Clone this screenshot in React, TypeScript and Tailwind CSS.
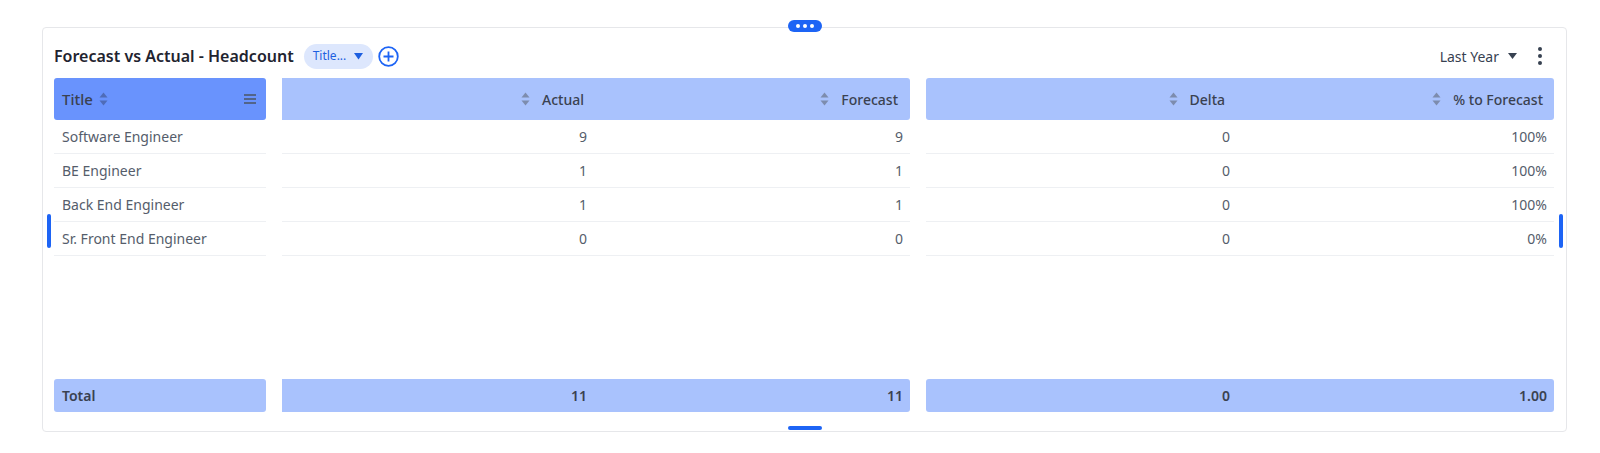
import { useState } from "react";

type Row = { title: string; actual: number; forecast: number; delta: number; pct: string };

const ROWS: Row[] = [
  { title: "Software Engineer", actual: 9, forecast: 9, delta: 0, pct: "100%" },
  { title: "BE Engineer", actual: 1, forecast: 1, delta: 0, pct: "100%" },
  { title: "Back End Engineer", actual: 1, forecast: 1, delta: 0, pct: "100%" },
  { title: "Sr. Front End Engineer", actual: 0, forecast: 0, delta: 0, pct: "0%" },
];

function SortIcon({ dark }: { dark?: boolean }) {
  return (
    <svg width="9" height="14" viewBox="0 0 9 14" className={dark ? "text-[#4f6cb8]" : "text-[#7d8cae]"}>
      <path d="M4.5 0.5 L8.5 5.5 H0.5 Z" fill="currentColor" />
      <path d="M4.5 13.5 L8.5 8.5 H0.5 Z" fill="currentColor" />
    </svg>
  );
}

function HeadCell({ label, className = "" }: { label: string; className?: string }) {
  return (
    <div className={`flex items-center justify-end gap-3 pr-3 ${className}`}>
      <SortIcon />
      <span>{label}</span>
    </div>
  );
}

export default function App() {
  const [period] = useState("Last Year");
  const totals = ROWS.reduce(
    (a, r) => ({ actual: a.actual + r.actual, forecast: a.forecast + r.forecast, delta: a.delta + r.delta }),
    { actual: 0, forecast: 0, delta: 0 }
  );

  return (
    <div className="h-[453px] w-[1600px] bg-white pt-[27px] font-['Noto_Sans',sans-serif] text-[#555d6b]">
      <div className="relative ml-[42px] flex h-[405px] w-[1525px] flex-col rounded border border-[#e6e7ea] pl-[11px] pr-3">
        {/* drag handles */}
        <div className="absolute left-1/2 top-[-8px] flex h-3 w-[34px] -translate-x-1/2 items-center justify-center gap-[3px] rounded-full bg-[#1d64f5]">
          <span className="h-1 w-1 rounded-full bg-white" />
          <span className="h-1 w-1 rounded-full bg-white" />
          <span className="h-1 w-1 rounded-full bg-white" />
        </div>
        <div className="absolute left-1/2 top-[398px] h-1 w-[34px] -translate-x-1/2 rounded-full bg-[#1d64f5]" />
        <div className="absolute left-[4px] top-[186px] h-[34px] w-1 rounded-full bg-[#1d64f5]" />
        <div className="absolute right-[3px] top-[186px] h-[34px] w-1 rounded-full bg-[#1d64f5]" />

        {/* title bar */}
        <div className="mt-[14px] flex h-7 items-center">
          <h2 className="text-[16px] font-semibold text-[#1f2430]">Forecast vs Actual - Headcount</h2>
          <button
            type="button"
            className="ml-[10px] flex h-[25px] items-center gap-2 rounded-full bg-[#dde7fd] pl-[9px] pr-[10px] text-[12px] text-[#1d5fe0]"
          >
            Title...
            <svg width="9" height="7" viewBox="0 0 9 7">
              <path d="M0 0 H9 L4.5 6.5 Z" fill="currentColor" />
            </svg>
          </button>
          <svg width="21" height="21" viewBox="0 0 21 21" className="ml-[5px] text-[#1d64f5]">
            <circle cx="10.5" cy="10.5" r="9.3" fill="none" stroke="currentColor" strokeWidth="1.8" />
            <path d="M10.5 5.5 V15.5 M5.5 10.5 H15.5" stroke="currentColor" strokeWidth="1.8" />
          </svg>
          <div className="ml-auto flex items-center text-[14px] text-[#374151]">
            <span>{period}</span>
            <svg width="9" height="7" viewBox="0 0 9 7" className="ml-[9px]">
              <path d="M0 0 H9 L4.5 6 Z" fill="currentColor" />
            </svg>
            <div className="ml-[21px] mr-[12px] flex flex-col items-center gap-[3px]">
              <span className="h-1 w-1 rounded-full bg-[#374151]" />
              <span className="h-1 w-1 rounded-full bg-[#374151]" />
              <span className="h-1 w-1 rounded-full bg-[#374151]" />
            </div>
          </div>
        </div>

        {/* table */}
        <div className="mt-2 grid h-[334px] grid-cols-[212px_1fr_1fr] gap-x-4 text-[14px]">
          {/* title column */}
          <div className="flex flex-col">
            <div className="flex h-[42px] items-center rounded-[3px] bg-[#6993fd] pl-2 pr-[10px] font-medium text-[#3a4150]">
              <span className="text-[15px]">Title</span>
              <span className="ml-[6px]">
                <SortIcon dark />
              </span>
              <svg width="12" height="10" viewBox="0 0 12 10" className="ml-auto text-[#4b5563]">
                <path d="M0 1 H12 M0 5 H12 M0 9 H12" stroke="currentColor" strokeWidth="1.4" />
              </svg>
            </div>
            {ROWS.map((r) => (
              <div key={r.title} className="flex h-[34px] items-center border-b border-[#eef0f3] pl-2">
                {r.title}
              </div>
            ))}
            <div className="mt-auto flex h-[33px] items-center rounded-[3px] bg-[#a9c2fd] pl-2 font-semibold text-[#3a4150]">
              Total
            </div>
          </div>

          {/* actual / forecast */}
          <div className="flex flex-col">
            <div className="grid h-[42px] grid-cols-2 rounded-r-[3px] bg-[#a9c2fd] font-medium text-[#3a4150]">
              <HeadCell label="Actual" />
              <HeadCell label="Forecast" />
            </div>
            {ROWS.map((r) => (
              <div key={r.title} className="grid h-[34px] grid-cols-2 items-center border-b border-[#eef0f3] text-right">
                <span className="pr-[9px]">{r.actual}</span>
                <span className="pr-[7px]">{r.forecast}</span>
              </div>
            ))}
            <div className="mt-auto grid h-[33px] grid-cols-2 items-center rounded-r-[3px] bg-[#a9c2fd] text-right font-semibold text-[#3a4150]">
              <span className="pr-[9px]">{totals.actual}</span>
              <span className="pr-[7px]">{totals.forecast}</span>
            </div>
          </div>

          {/* delta / % */}
          <div className="flex flex-col">
            <div className="grid h-[42px] grid-cols-2 rounded-[3px] bg-[#a9c2fd] font-medium text-[#3a4150]">
              <HeadCell label="Delta" className="pr-[15px]" />
              <HeadCell label="% to Forecast" className="pr-[11px]" />
            </div>
            {ROWS.map((r) => (
              <div key={r.title} className="grid h-[34px] grid-cols-2 items-center border-b border-[#eef0f3] text-right">
                <span className="pr-[10px]">{r.delta}</span>
                <span className="pr-[7px]">{r.pct}</span>
              </div>
            ))}
            <div className="mt-auto grid h-[33px] grid-cols-2 items-center rounded-[3px] bg-[#a9c2fd] text-right font-semibold text-[#3a4150]">
              <span className="pr-[10px]">{totals.delta}</span>
              <span className="pr-[7px]">1.00</span>
            </div>
          </div>
        </div>
      </div>
    </div>
  );
}
